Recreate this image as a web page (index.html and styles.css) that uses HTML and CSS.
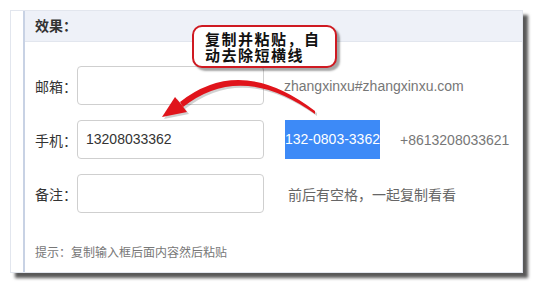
FILE: index.html
```html
<!DOCTYPE html>
<html lang="zh-CN">
<head>
<meta charset="utf-8">
<title>效果</title>
<link rel="stylesheet" href="styles.css">
</head>
<body>
<div class="panel">
  <div class="inner">
    <div class="head">效果：</div>
    <div class="body">
      <div class="row">
        <span class="label">邮箱：</span>
        <div class="field"></div>
        <span class="extra">zhangxinxu#zhangxinxu.com</span>
      </div>
      <div class="row">
        <span class="label">手机：</span>
        <div class="field">13208033362</div>
        <span class="extra sel">132-0803-3362</span>
        <span class="extra">+8613208033621</span>
      </div>
      <div class="row">
        <span class="label">备注：</span>
        <div class="field"></div>
        <span class="extra pre"> 前后有空格，一起复制看看 </span>
      </div>
      <p class="tip">提示：复制输入框后面内容然后粘贴</p>
    </div>
  </div>
  <div class="callout">复制并粘贴，自<br>动去除短横线</div>
</div>
<svg class="arrow" width="536" height="285" viewBox="0 0 536 285" xmlns="http://www.w3.org/2000/svg">
  <g class="shadow" transform="translate(2,2)">
    <path d="M315,111 Q241,54 180,102 L183,107 Q241,61 315,114 Z"/>
    <path d="M162,117 L175,97 L181,104 L187,112 Z"/>
  </g>
  <g class="red">
    <path d="M315,111 Q241,54 180,102 L183,107 Q241,61 315,114 Z"/>
    <path d="M162,117 L175,97 L181,104 L187,112 Z"/>
  </g>
</svg>
</body>
</html>
```
FILE: styles.css
```css
html, body {
  margin: 0;
  padding: 0;
  background: #fff;
}
body {
  position: relative;
  width: 536px;
  height: 285px;
  overflow: hidden;
  font-family: "Liberation Sans", "Noto Sans CJK SC", sans-serif;
  font-size: 14px;
  color: #333;
}
.panel {
  position: relative;
  margin: 10px 0 0 10px;
  width: 513px;
  height: 263px;
  box-sizing: border-box;
  background: #fff;
  border: 1px solid #e2e6ee;
  padding-left: 12px;
  box-shadow: 5px 5px 3px rgba(0, 0, 0, 0.65);
}
.inner {
  height: 100%;
  border-left: 2px solid #c8d2e4;
}
.head {
  height: 30px;
  line-height: 30px;
  background: #eef1f8;
  border-bottom: 1px solid #e2e6ee;
  padding-left: 10px;
  font-weight: bold;
  font-size: 14px;
  color: #333;
}
.body {
  padding: 24px 0 0 10px;
}
.row {
  display: flex;
  align-items: center;
  height: 39px;
  margin-bottom: 15px;
}
.label {
  width: 42px;
  flex: none;
  color: #333;
}
.field {
  width: 187px;
  height: 39px;
  box-sizing: border-box;
  border: 1px solid #cfcfcf;
  border-radius: 4px;
  padding: 0 8px;
  line-height: 37px;
  color: #333;
  flex: none;
}
.extra {
  margin-left: 20px;
  color: #777;
  white-space: nowrap;
}
.pre {
  white-space: pre;
  color: #666;
}
.sel {
  background: #3d8af7;
  color: #fff;
  line-height: 39px;
  height: 39px;
  margin-left: 21px;
}
.tip {
  margin: 32px 0 0;
  font-size: 12px;
  line-height: 16px;
  color: #777;
}
.callout {
  position: absolute;
  left: 181px;
  top: 14px;
  width: 145px;
  height: 43px;
  box-sizing: border-box;
  border: 2px solid #cf1a22;
  border-radius: 10px;
  background: #fff;
  box-shadow: 3px 3px 2px rgba(0, 0, 0, 0.35);
  padding: 5px 0 0 11px;
  font-weight: bold;
  font-size: 15px;
  line-height: 16px;
  letter-spacing: 1.5px;
  color: #111;
  white-space: nowrap;
}
.arrow {
  position: absolute;
  left: 0;
  top: 0;
  pointer-events: none;
}
.arrow .shadow {
  fill: rgba(0, 0, 0, 0.18);
}
.arrow .red {
  fill: #e0141b;
}
```
